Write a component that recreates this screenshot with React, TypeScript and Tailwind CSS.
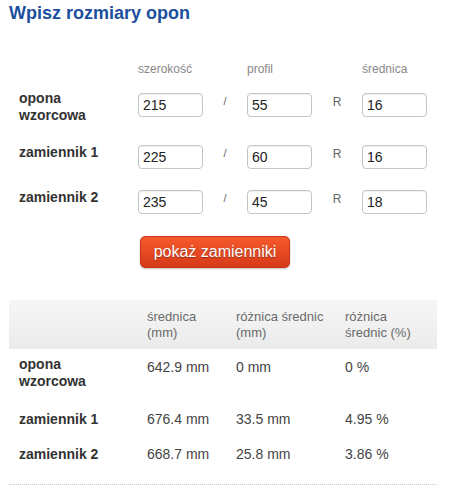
import React from "react";

const inputCls =
  "block w-[65px] h-[24px] border border-[#c4c4c4] rounded-[4px] px-[4px] text-[14px] leading-[17px] text-[#222] bg-white shadow-[inset_0_1px_1px_rgba(0,0,0,0.06)] outline-none";

function FormRow({
  label,
  a,
  b,
  c,
  rowCls,
  inputMt,
}: {
  label: React.ReactNode;
  a: string;
  b: string;
  c: string;
  rowCls: string;
  inputMt: string;
}) {
  return (
    <div className={"grid grid-cols-[119px_65px_44px_65px_50px_65px] items-start " + rowCls}>
      <div className="text-[14px] leading-[17px] font-bold text-[#333]">{label}</div>
      <div className={inputMt}>
        <input className={inputCls} defaultValue={a} readOnly />
      </div>
      <div className={"text-center text-[11px] leading-[16px] text-[#666] " + inputMt}>
        <span className="relative top-[0px]">/</span>
      </div>
      <div className={inputMt}>
        <input className={inputCls} defaultValue={b} readOnly />
      </div>
      <div className={"text-center text-[12px] leading-[16px] text-[#666] " + inputMt}>
        <span className="relative top-[1px]">R</span>
      </div>
      <div className={inputMt}>
        <input className={inputCls} defaultValue={c} readOnly />
      </div>
    </div>
  );
}

function TableRow({
  label,
  d,
  diff,
  pct,
  rowCls,
  valCls,
}: {
  label: React.ReactNode;
  d: string;
  diff: string;
  pct: string;
  rowCls: string;
  valCls: string;
}) {
  return (
    <div className={"grid grid-cols-[128px_89px_109px_1fr] pl-[10px] items-start " + rowCls}>
      <div className="text-[14px] leading-[17px] font-bold text-[#333]">{label}</div>
      <div className={"text-[14px] leading-[17px] text-[#444] " + valCls}>{d}</div>
      <div className={"text-[14px] leading-[17px] text-[#444] " + valCls}>{diff}</div>
      <div className={"text-[14px] leading-[17px] text-[#444] " + valCls}>{pct}</div>
    </div>
  );
}

export default function App() {
  return (
    <div className="w-[449px] h-[487px] bg-white overflow-hidden font-['Liberation_Sans',Arial,sans-serif]">
      <h1 className="ml-[9px] pt-[2px] text-[18px] leading-[22px] font-bold text-[#1c4f9e]">
        Wpisz rozmiary opon
      </h1>

      <div className="ml-[19px] mt-[37px]">
        <div className="grid grid-cols-[119px_65px_44px_65px_50px_65px] text-[12px] leading-[16px] text-[#888]">
          <div />
          <div>szerokość</div>
          <div />
          <div>profil</div>
          <div />
          <div>średnica</div>
        </div>

        <FormRow
          label={
            <>
              opona
              <br />
              wzorcowa
            </>
          }
          a="215"
          b="55"
          c="16"
          rowCls="mt-[13px]"
          inputMt="mt-[3px]"
        />
        <FormRow label="zamiennik 1" a="225" b="60" c="16" rowCls="mt-[20px]" inputMt="mt-[1px]" />
        <FormRow label="zamiennik 2" a="235" b="45" c="18" rowCls="mt-[20px]" inputMt="mt-[1px]" />

        <button
          type="button"
          className="ml-[121px] mt-[22px] w-[150px] h-[32px] rounded-[5px] border border-[#c9361a] bg-gradient-to-b from-[#f5592c] to-[#d63a18] text-white text-[16px] leading-[20px] [text-shadow:0_1px_1px_rgba(0,0,0,0.35)] shadow-[0_1px_2px_rgba(0,0,0,0.25)]"
        >
          pokaż zamienniki
        </button>
      </div>

      <div className="ml-[9px] mt-[32px] w-[428px]">
        <div className="grid grid-cols-[128px_89px_109px_1fr] pl-[10px] h-[49px] pt-[9px] bg-gradient-to-b from-[#f6f6f6] to-[#ebebeb] text-[13px] leading-[16px] text-[#6a6a6a]">
          <div />
          <div>
            średnica
            <br />
            (mm)
          </div>
          <div>
            różnica średnic
            <br />
            (mm)
          </div>
          <div>
            różnica
            <br />
            średnic (%)
          </div>
        </div>

        <TableRow
          label={
            <>
              opona
              <br />
              wzorcowa
            </>
          }
          d="642.9 mm"
          diff="0 mm"
          pct="0 %"
          rowCls="pt-[7px]"
          valCls="mt-[3px]"
        />
        <TableRow label="zamiennik 1" d="676.4 mm" diff="33.5 mm" pct="4.95 %" rowCls="pt-[21px]" valCls="" />
        <TableRow label="zamiennik 2" d="668.7 mm" diff="25.8 mm" pct="3.86 %" rowCls="pt-[18px]" valCls="" />
        <div className="mt-[21px] border-t border-dotted border-[#c8c8c8]" />
      </div>
    </div>
  );
}
